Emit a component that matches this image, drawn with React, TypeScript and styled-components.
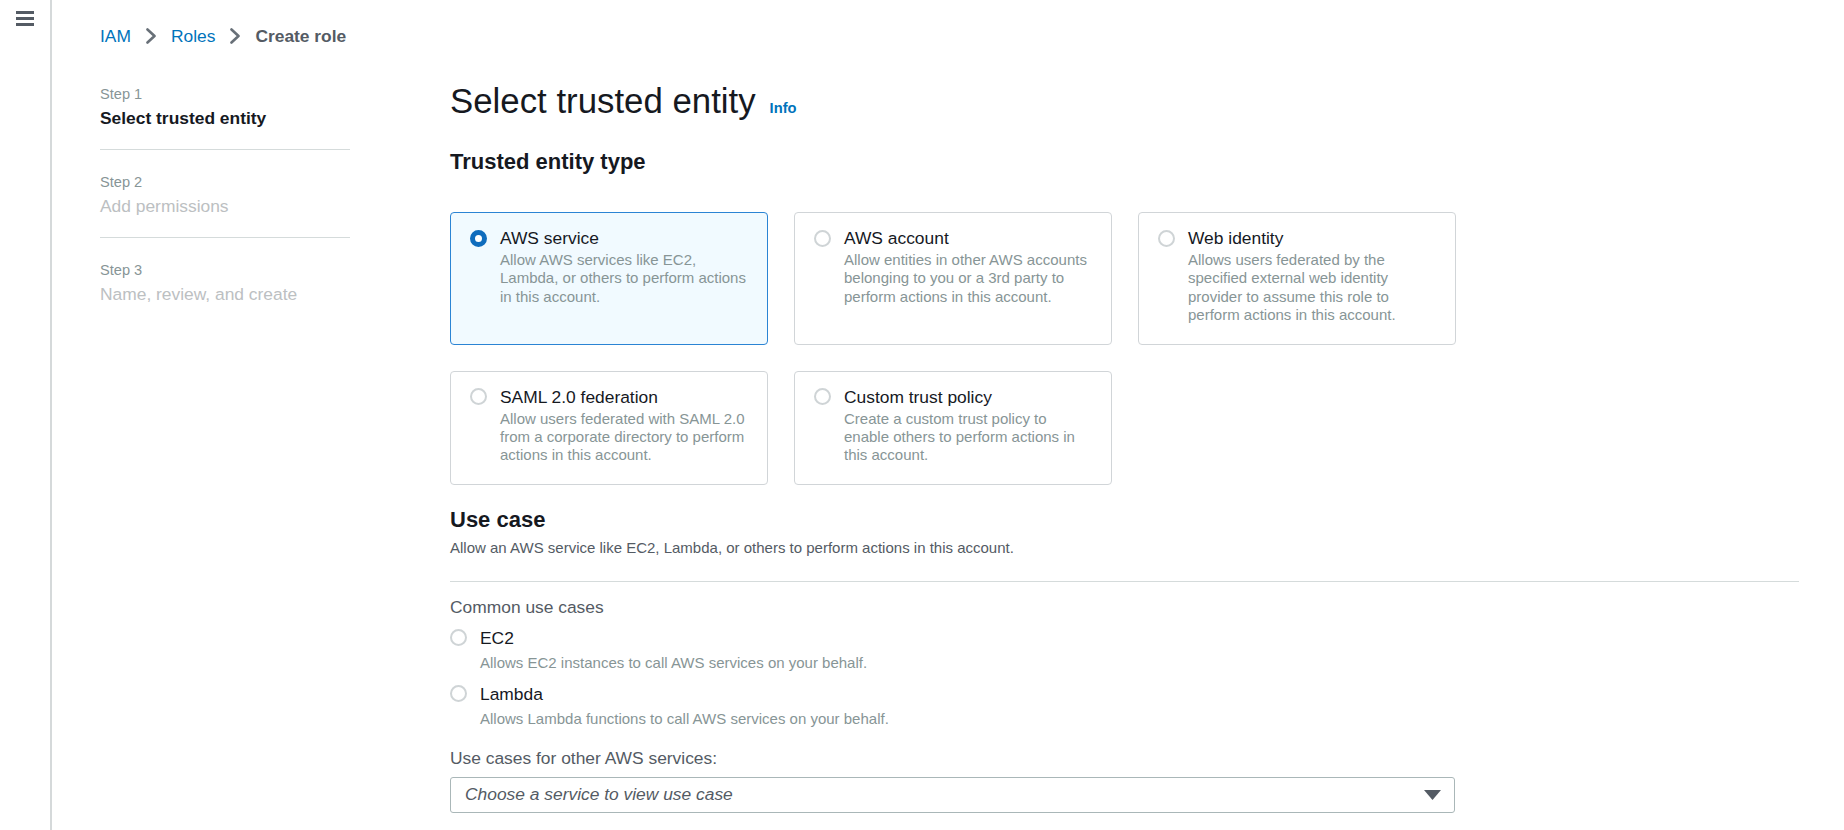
import React from "react";
import styled, { createGlobalStyle } from "styled-components";

const GlobalStyle = createGlobalStyle`
  html, body {
    margin: 0;
    padding: 0;
    background: #ffffff;
  }
  body {
    font-family: "Liberation Sans", Arial, Helvetica, sans-serif;
    color: #16191f;
  }
  *, *::before, *::after {
    box-sizing: border-box;
  }
`;

const Shell = styled.div`
  display: flex;
  min-height: 100vh;
`;

const Rail = styled.aside`
  flex: none;
  width: 52px;
  border-right: 2px solid #d5d9da;
  display: flex;
  justify-content: center;
  align-items: flex-start;
  padding-top: 11px;
`;

const MenuButton = styled.button`
  border: 0;
  padding: 0;
  background: none;
  display: block;
  cursor: pointer;
  line-height: 0;
`;

const Content = styled.div`
  flex: 1;
  min-width: 0;
  padding: 24px 45px 0 48px;
`;

const Breadcrumb = styled.nav`
  display: flex;
  align-items: center;
  gap: 14px;
  height: 24px;
  font-size: 17.4px;
  line-height: 24px;
`;

const Crumb = styled.a`
  color: #0073bb;
  text-decoration: none;
`;

const CurrentCrumb = styled.span`
  color: #545b64;
  font-weight: 700;
`;

const Layout = styled.div`
  display: flex;
  align-items: flex-start;
  margin-top: 14px;
`;

const StepList = styled.ol`
  flex: none;
  width: 250px;
  margin: 0 100px 0 0;
  padding: 0;
  list-style: none;
`;

const StepItem = styled.li`
  padding: 22px 0 17px;
  border-bottom: 1px solid #d5dbdb;
  &:last-child {
    border-bottom: none;
  }
`;

const StepLabel = styled.div`
  font-size: 14.6px;
  line-height: 20px;
  color: #879596;
`;

const StepTitle = styled.div<{ $active?: boolean }>`
  font-size: 17.4px;
  line-height: 28px;
  color: ${(p) => (p.$active ? "#16191f" : "#bcc0c2")};
  font-weight: ${(p) => (p.$active ? 700 : 400)};
`;

const Main = styled.main`
  flex: 1;
  min-width: 0;
  padding-top: 17px;
`;

const PageTitle = styled.h1`
  margin: 0;
  font-size: 34.8px;
  font-weight: 400;
  line-height: 44px;
  color: #16191f;
`;

const InfoLink = styled.a`
  margin-left: 14px;
  font-size: 14.7px;
  font-weight: 700;
  color: #0073bb;
  text-decoration: none;
`;

const SectionTitle = styled.h2<{ $gap: number }>`
  margin: ${(p) => p.$gap}px 0 0;
  font-size: 22px;
  font-weight: 700;
  line-height: 30px;
  color: #16191f;
`;

const TileGrid = styled.div`
  display: grid;
  grid-template-columns: repeat(3, 318px);
  gap: 26px;
  margin-top: 35px;
`;

const Tile = styled.label<{ $selected?: boolean }>`
  display: flex;
  align-items: flex-start;
  padding: 14px 19px 19px 19px;
  border: 1px solid ${(p) => (p.$selected ? "#2b84d4" : "#d1d5d8")};
  border-radius: 4px;
  background: ${(p) => (p.$selected ? "#f1faff" : "#ffffff")};
  cursor: pointer;
`;

const Radio = styled.span<{ $checked?: boolean }>`
  flex: none;
  width: 17px;
  height: 17px;
  margin: 2.5px 13px 0 0;
  border-radius: 50%;
  background: #ffffff;
  border: ${(p) => (p.$checked ? "5.5px solid #0f6cbd" : "2px solid #cfd4d6")};
`;

const TileBody = styled.div`
  flex: 1;
  min-width: 0;
`;

const OptionTitle = styled.div`
  font-size: 17.4px;
  line-height: 22px;
  color: #16191f;
`;

const TileDesc = styled.div`
  margin-top: 2px;
  font-size: 15px;
  line-height: 18.4px;
  color: #879596;
`;

const SectionDesc = styled.p`
  margin: 3px 0 0;
  font-size: 15px;
  line-height: 20px;
  color: #545b64;
`;

const Divider = styled.hr`
  margin: 23px 0 0;
  height: 0;
  border: 0;
  border-top: 1px solid #d5dbdb;
`;

const FieldLabel = styled.div<{ $gap: number }>`
  margin-top: ${(p) => p.$gap}px;
  font-size: 17.4px;
  line-height: 22px;
  color: #545b64;
`;

const OptionList = styled.div`
  display: flex;
  flex-direction: column;
  gap: 10px;
  margin-top: 9px;
`;

const Option = styled.label`
  display: flex;
  align-items: flex-start;
  cursor: pointer;
`;

const OptionDesc = styled.div`
  margin-top: 4px;
  font-size: 15px;
  line-height: 20px;
  color: #879596;
`;

const SelectBox = styled.div`
  margin-top: 8px;
  width: 1005px;
  height: 36px;
  border: 1px solid #aab7b8;
  border-radius: 3px;
  display: flex;
  align-items: center;
  justify-content: space-between;
  padding: 0 13px 0 14px;
  font-size: 17.4px;
  font-style: italic;
  color: #545b64;
  background: #ffffff;
`;

const Chevron = () => (
  <svg width="12" height="16" viewBox="0 0 12 16" aria-hidden="true">
    <polyline
      points="2.5,1.5 9.5,8 2.5,14.5"
      fill="none"
      stroke="#687078"
      strokeWidth="2.6"
      strokeLinecap="round"
      strokeLinejoin="round"
    />
  </svg>
);

const Hamburger = () => (
  <svg width="18" height="15" viewBox="0 0 18 15" aria-hidden="true">
    <rect x="0" y="0" width="18" height="3" fill="#545b64" />
    <rect x="0" y="6" width="18" height="3" fill="#545b64" />
    <rect x="0" y="12" width="18" height="3" fill="#545b64" />
  </svg>
);

const CaretDown = () => (
  <svg width="17" height="10" viewBox="0 0 17 10" aria-hidden="true">
    <polygon points="0,0 17,0 8.5,10" fill="#545b64" />
  </svg>
);

const steps = [
  { label: "Step 1", title: "Select trusted entity", active: true },
  { label: "Step 2", title: "Add permissions", active: false },
  { label: "Step 3", title: "Name, review, and create", active: false },
];

const tiles = [
  {
    title: "AWS service",
    desc: "Allow AWS services like EC2, Lambda, or others to perform actions in this account.",
    selected: true,
  },
  {
    title: "AWS account",
    desc: "Allow entities in other AWS accounts belonging to you or a 3rd party to perform actions in this account.",
  },
  {
    title: "Web identity",
    desc: "Allows users federated by the specified external web identity provider to assume this role to perform actions in this account.",
  },
  {
    title: "SAML 2.0 federation",
    desc: "Allow users federated with SAML 2.0 from a corporate directory to perform actions in this account.",
  },
  {
    title: "Custom trust policy",
    desc: "Create a custom trust policy to enable others to perform actions in this account.",
  },
];

const useCases = [
  { title: "EC2", desc: "Allows EC2 instances to call AWS services on your behalf." },
  { title: "Lambda", desc: "Allows Lambda functions to call AWS services on your behalf." },
];

export default function App() {
  return (
    <>
      <GlobalStyle />
      <Shell>
        <Rail>
          <MenuButton aria-label="Open navigation">
            <Hamburger />
          </MenuButton>
        </Rail>
        <Content>
          <Breadcrumb>
            <Crumb href="#">IAM</Crumb>
            <Chevron />
            <Crumb href="#">Roles</Crumb>
            <Chevron />
            <CurrentCrumb>Create role</CurrentCrumb>
          </Breadcrumb>
          <Layout>
            <StepList>
              {steps.map((s) => (
                <StepItem key={s.label}>
                  <StepLabel>{s.label}</StepLabel>
                  <StepTitle $active={s.active}>{s.title}</StepTitle>
                </StepItem>
              ))}
            </StepList>
            <Main>
              <PageTitle>
                Select trusted entity
                <InfoLink href="#">Info</InfoLink>
              </PageTitle>
              <SectionTitle $gap={17}>Trusted entity type</SectionTitle>
              <TileGrid>
                {tiles.map((t) => (
                  <Tile key={t.title} $selected={t.selected}>
                    <Radio $checked={t.selected} />
                    <TileBody>
                      <OptionTitle>{t.title}</OptionTitle>
                      <TileDesc>{t.desc}</TileDesc>
                    </TileBody>
                  </Tile>
                ))}
              </TileGrid>
              <SectionTitle $gap={20}>Use case</SectionTitle>
              <SectionDesc>
                Allow an AWS service like EC2, Lambda, or others to perform actions in this account.
              </SectionDesc>
              <Divider />
              <FieldLabel $gap={14}>Common use cases</FieldLabel>
              <OptionList>
                {useCases.map((u) => (
                  <Option key={u.title}>
                    <Radio />
                    <TileBody>
                      <OptionTitle>{u.title}</OptionTitle>
                      <OptionDesc>{u.desc}</OptionDesc>
                    </TileBody>
                  </Option>
                ))}
              </OptionList>
              <FieldLabel $gap={18}>Use cases for other AWS services:</FieldLabel>
              <SelectBox role="combobox" aria-expanded="false">
                <span>Choose a service to view use case</span>
                <CaretDown />
              </SelectBox>
            </Main>
          </Layout>
        </Content>
      </Shell>
    </>
  );
}
